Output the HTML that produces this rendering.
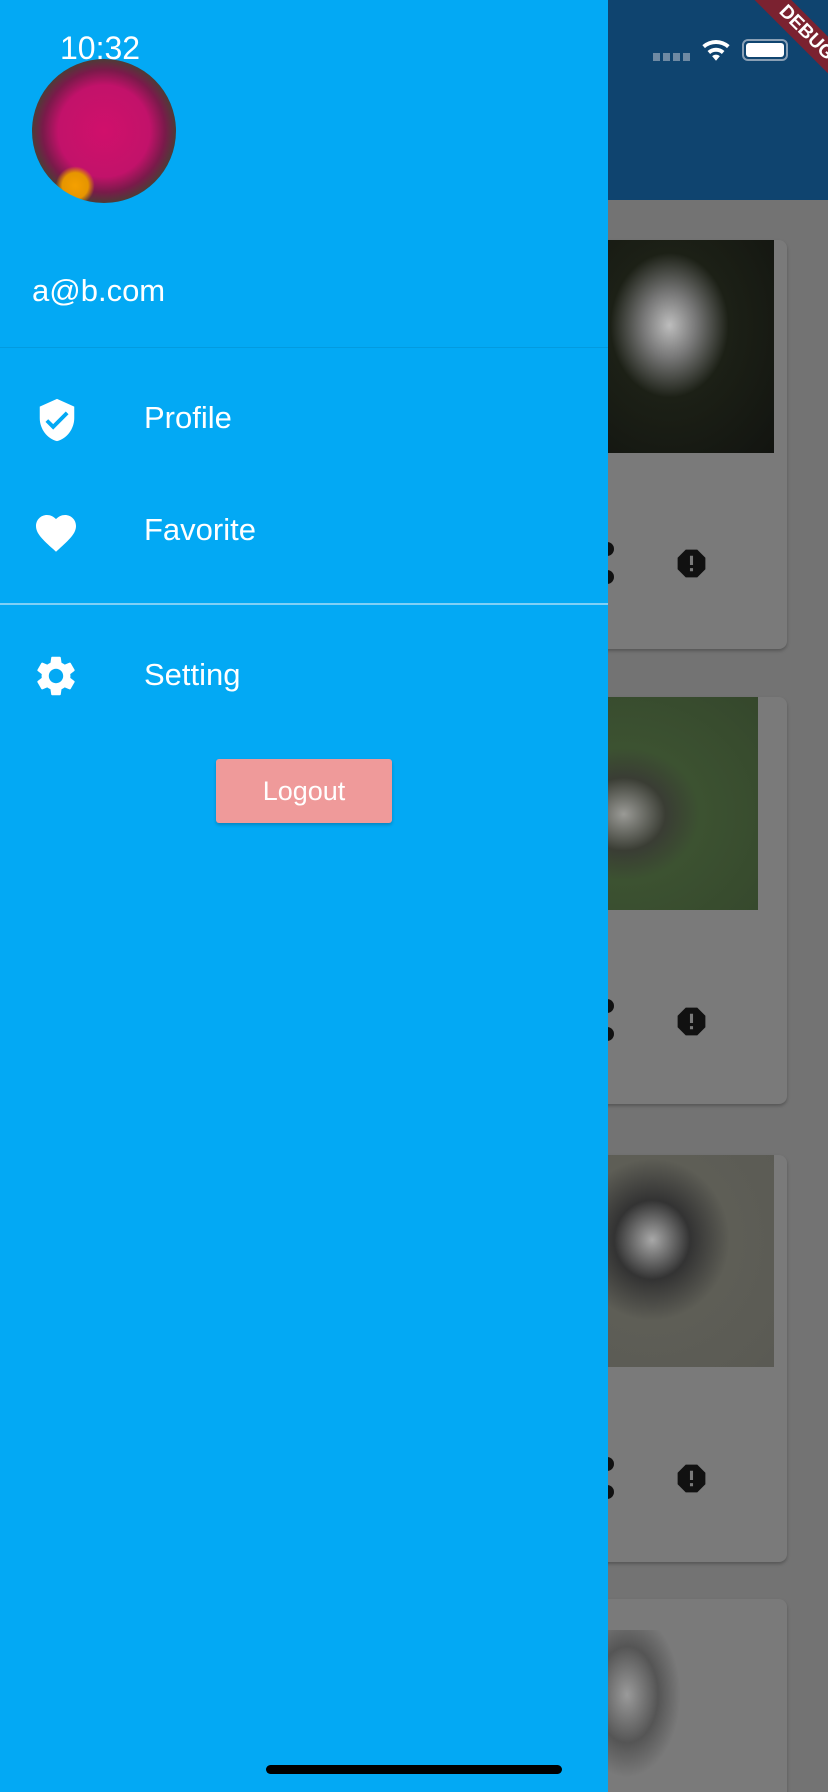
<!DOCTYPE html>
<html style="overflow:hidden;width:828px;height:1792px"><head><meta charset="utf-8"><style>
*{margin:0;padding:0;box-sizing:border-box}
body{width:828px;height:1792px;position:relative;overflow:hidden;background:#737373;font-family:"Liberation Sans",sans-serif}
.abs{position:absolute}
.drawer{left:0;top:0;width:608px;height:1792px;background:#03A9F4;color:#fff}
.card{background:#7a7a7a;border-radius:8px;box-shadow:0 2px 3px rgba(0,0,0,.25)}
.txt{position:absolute;font-size:31px;color:#fff;left:144px}
</style></head><body>
<div class="abs" style="left:0;top:0;width:828px;height:200px;background:#0f446f"></div>
<div class="abs card" style="left:560px;top:240px;width:227px;height:409px"></div>
<div class="abs" style="left:600px;top:240px;width:174px;height:213px;background:radial-gradient(ellipse at 40% 40%,#bdbdbd 0,#777 18%,#1c2016 40%,#121410 100%)"></div>
<div class="abs card" style="left:560px;top:697px;width:227px;height:407px"></div>
<div class="abs" style="left:600px;top:697px;width:158px;height:213px;background:radial-gradient(ellipse at 15% 55%,#9a9a96 0,#3a3d34 22%,#3c5231 40%,#35472c 100%)"></div>
<div class="abs card" style="left:560px;top:1155px;width:227px;height:407px"></div>
<div class="abs" style="left:600px;top:1155px;width:174px;height:212px;background:radial-gradient(ellipse at 30% 40%,#a8a8a8 0,#333 22%,#5e5e56 45%,#5a5a54 100%)"></div>
<div class="abs card" style="left:560px;top:1599px;width:227px;height:193px;border-radius:8px 8px 0 0"></div>
<div class="abs" style="left:600px;top:1630px;width:90px;height:162px;background:radial-gradient(ellipse at 30% 40%,#9a9a9a 0,#555 35%,#7a7a7a 60%)"></div>
<svg class="abs" style="left:673px;top:545px" width="37" height="37" viewBox="0 0 24 24"><path fill="#111" d="M15.73 3H8.27L3 8.27v7.46L8.27 21h7.46L21 15.73V8.27L15.73 3zM13 17h-2v-2h2v2zm0-4h-2V7h2v6z"/></svg>
<svg class="abs" style="left:673px;top:1003px" width="37" height="37" viewBox="0 0 24 24"><path fill="#111" d="M15.73 3H8.27L3 8.27v7.46L8.27 21h7.46L21 15.73V8.27L15.73 3zM13 17h-2v-2h2v2zm0-4h-2V7h2v6z"/></svg>
<svg class="abs" style="left:673px;top:1460px" width="37" height="37" viewBox="0 0 24 24"><path fill="#111" d="M15.73 3H8.27L3 8.27v7.46L8.27 21h7.46L21 15.73V8.27L15.73 3zM13 17h-2v-2h2v2zm0-4h-2V7h2v6z"/></svg>
<div class="abs" style="left:600px;top:542px;width:14px;height:14px;border-radius:50%;background:#111"></div>
<div class="abs" style="left:600px;top:570px;width:14px;height:14px;border-radius:50%;background:#111"></div>
<div class="abs" style="left:600px;top:999px;width:14px;height:14px;border-radius:50%;background:#111"></div>
<div class="abs" style="left:600px;top:1027px;width:14px;height:14px;border-radius:50%;background:#111"></div>
<div class="abs" style="left:600px;top:1457px;width:14px;height:14px;border-radius:50%;background:#111"></div>
<div class="abs" style="left:600px;top:1485px;width:14px;height:14px;border-radius:50%;background:#111"></div>
<div class="abs" style="left:653px;top:53px;width:38px;height:8px;background:repeating-linear-gradient(90deg,#6f8aa3 0 7px,transparent 7px 10px)"></div>
<svg class="abs" style="left:700px;top:36px" width="32" height="26" viewBox="0 0 24 20"><path fill="#fff" d="M12 19l3-3.5a4.5 4.5 0 0 0-6 0zM5.5 11.5l2 2.3a6.8 6.8 0 0 1 9 0l2-2.3a9.8 9.8 0 0 0-13 0zM1.5 7l2 2.3a13 13 0 0 1 17 0l2-2.3a16 16 0 0 0-21 0z"/></svg>
<div class="abs" style="left:742px;top:39px;width:46px;height:22px;border:2px solid #8aa0b5;border-radius:6px;padding:2px"><div style="width:100%;height:100%;background:#fff;border-radius:3px"></div></div>
<div class="abs" style="left:0;top:0;width:828px;height:200px;overflow:hidden">
<div class="abs" style="left:706px;top:20px;width:200px;height:26px;background:#7b2230;transform:rotate(45deg);color:#fff;font-weight:bold;font-size:19px;text-align:center;line-height:26px">DEBUG</div>
</div>
<div class="abs drawer">
<div class="abs" style="left:60px;top:30px;font-size:32px;color:#fff">10:32</div>
<div class="abs" style="left:32px;top:59px;width:144px;height:144px;border-radius:50%;overflow:hidden;background:radial-gradient(circle at 30% 88%,#f5a000 0,#e69500 8%,transparent 12%),radial-gradient(circle at 50% 50%,#d0106b 0,#c2126a 45%,#7a1a4a 60%,#3b4a2f 75%,#2a3524 100%)"></div>
<div class="abs" style="left:32px;top:273px;font-size:31px">a@b.com</div>
<div class="abs" style="left:0;top:347px;width:608px;height:1px;background:rgba(0,0,0,.08)"></div>
<svg class="abs" style="left:34px;top:396px" width="46" height="48" viewBox="0 0 24 24"><path fill="#fff" d="M12 1L3 5v6c0 5.55 3.84 10.74 9 12 5.16-1.26 9-6.450 9-12V5l-9-4zm-2 16l-4-4 1.41-1.41L10 14.17l6.59-6.59L18 9l-8 8z"/></svg>
<div class="txt" style="top:400px">Profile</div>
<svg class="abs" style="left:32px;top:509px" width="48" height="48" viewBox="0 0 24 24"><path fill="#fff" d="M12 21.35l-1.45-1.32C5.4 15.36 2 12.28 2 8.5 2 5.420 4.42 3 7.5 3c1.74 0 3.41.81 4.5 2.09C13.09 3.81 14.76 3 16.5 3 19.58 3 22 5.42 22 8.5c0 3.78-3.4 6.86-8.55 11.54L12 21.35z"/></svg>
<div class="txt" style="top:512px">Favorite</div>
<div class="abs" style="left:0;top:603px;width:608px;height:2px;background:#7fd0f6"></div>
<svg class="abs" style="left:32px;top:652px" width="48" height="48" viewBox="0 0 24 24"><path fill="#fff" d="M19.14 12.94c.04-.3.06-.61.06-.94 0-.32-.02-.64-.07-.94l2.03-1.58a.49.49 0 0 0 .12-.61l-1.92-3.32a.488.488 0 0 0-.59-.22l-2.39.96c-.5-.38-1.03-.7-1.62-.94l-.36-2.54a.484.484 0 0 0-.48-.41h-3.84c-.24 0-.43.17-.47.41l-.36 2.54c-.59.24-1.13.57-1.620.94l-2.39-.96c-.22-.08-.47 0-.59.22L2.74 8.87c-.12.21-.08.47.12.61l2.03 1.58c-.05.3-.09.63-.09.94s.02.64.07.94l-2.03 1.58a.49.49 0 0 0-.12.61l1.92 3.32c.12.22.37.29.59.22l2.39-.96c.5.38 1.03.7 1.62.94l.36 2.54c.05.24.24.41.48.41h3.84c.24 0 .44-.17.47-.41l.36-2.54c.59-.24 1.13-.56 1.62-.94l2.39.96c.22.08.47 0 .59-.22l1.92-3.32c.12-.22.07-.47-.12-.61l-2.01-1.58zM12 15.6c-1.98 0-3.6-1.62-3.6-3.6s1.62-3.6 3.6-3.6 3.6 1.62 3.6 3.6-1.62 3.6-3.6 3.6z"/></svg>
<div class="txt" style="top:657px">Setting</div>
<div class="abs" style="left:216px;top:759px;width:176px;height:64px;background:#EF9A9A;border-radius:3px;box-shadow:0 2px 3px rgba(0,0,0,.2);font-size:27px;color:#fff;text-align:center;line-height:64px">Logout</div>
</div>
<div class="abs" style="left:266px;top:1765px;width:296px;height:9px;border-radius:5px;background:#000"></div>
</body></html>
